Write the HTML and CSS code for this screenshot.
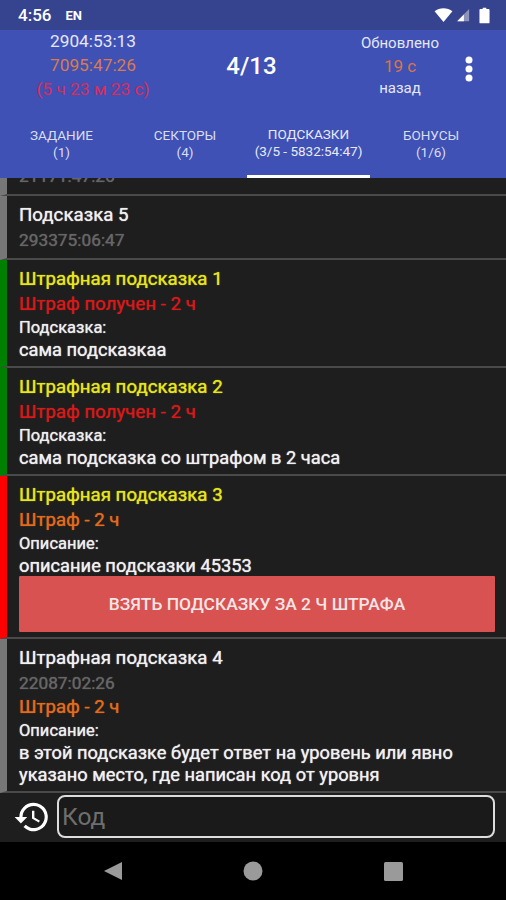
FILE: index.html
```html
<!DOCTYPE html>
<html lang="ru">
<head>
<meta charset="utf-8">
<title>Подсказки</title>
<link rel="stylesheet" href="styles.css">
</head>
<body>
<div class="app">
  <div class="status">
    <span class="clock">4:56</span><span class="lang">EN</span>
    <span class="status-icons">
      <svg width="19" height="15" viewBox="0 0 20 16"><path d="M0.5 3.5C5.5-0.8 14.5-0.8 19.500 3.500L10 15Z" fill="#fff"/></svg>
      <svg width="14" height="14" viewBox="0 0 16 16"><path d="M15 1V15H1Z" fill="#8e94b8"/><path d="M9 7.500V15H1.500Z" fill="#fff"/></svg>
      <svg class="batt" width="11" height="17" viewBox="0 0 12 17"><path d="M4 0H8V1.500H10.500A1 1 0 0 1 11.500 2.500V16A1 1 0 0 1 10.500 17H1.500A1 1 0 0 1 .5 16V2.500A1 1 0 0 1 1.500 1.500H4Z" fill="#fff"/></svg>
    </span>
  </div>
  <header class="header">
    <div class="top">
      <div class="timers">
        <div class="t-white">2904:53:13</div>
        <div class="t-orange">7095:47:26</div>
        <div class="t-red">(5 ч 23 м 23 с)</div>
      </div>
      <div class="level">4/13</div>
      <div class="updated">
        <div class="u-label">Обновлено</div>
        <div class="u-value">19 с</div>
        <div class="u-label">назад</div>
      </div>
      <svg class="more" width="10" height="26" viewBox="0 0 10 26"><circle cx="5" cy="4" r="3.500"/><circle cx="5" cy="13" r="3.500"/><circle cx="5" cy="22" r="3.500"/></svg>
    </div>
    <nav class="tabs">
      <div class="tab tab-a">ЗАДАНИЕ<br>(1)</div>
      <div class="tab tab-b">СЕКТОРЫ<br>(4)</div>
      <div class="tab tab-c active">ПОДСКАЗКИ<br>(3/5 - 5832:54:47)</div>
      <div class="tab tab-d">БОНУСЫ<br>(1/6)</div>
    </nav>
  </header>
  <main class="list">
    <article class="item grey short">
      <div class="time">21171:47:26</div>
    </article>
    <article class="item grey short">
      <div class="title">Подсказка 5</div>
      <div class="time">293375:06:47</div>
    </article>
    <article class="item green">
      <div class="title yellow">Штрафная подсказка 1</div>
      <div class="penalty red">Штраф получен - 2 ч</div>
      <div class="label">Подсказка:</div>
      <div class="body">сама подсказкаа</div>
    </article>
    <article class="item green">
      <div class="title yellow">Штрафная подсказка 2</div>
      <div class="penalty red">Штраф получен - 2 ч</div>
      <div class="label">Подсказка:</div>
      <div class="body">сама подсказка со штрафом в 2 часа</div>
    </article>
    <article class="item redbar">
      <div class="title yellow">Штрафная подсказка 3</div>
      <div class="penalty orange">Штраф - 2 ч</div>
      <div class="label">Описание:</div>
      <div class="body">описание подсказки 45353</div>
      <div class="take">ВЗЯТЬ ПОДСКАЗКУ ЗА 2 Ч ШТРАФА</div>
    </article>
    <article class="item grey">
      <div class="title">Штрафная подсказка 4</div>
      <div class="time">22087:02:26</div>
      <div class="penalty orange">Штраф - 2 ч</div>
      <div class="label">Описание:</div>
      <div class="body">в этой подсказке будет ответ на уровень или явно указано место, где написан код от уровня</div>
    </article>
  </main>
  <div class="code-bar">
    <svg class="history" width="38" height="38" viewBox="0 0 24 24"><path fill="#fff" d="M13 3a9 9 0 0 0-9 9H1l3.890 3.890.07.140L9 12H6a7 7 0 1 1 2.050 4.950l-1.420 1.420A9 9 0 1 0 13 3zm-1 5v5l4.280 2.540.72-1.210-3.500-2.080V8z"/></svg>
    <div class="code-input">Код</div>
  </div>
  <div class="navbar">
    <svg width="20" height="20" viewBox="0 0 20 20"><path d="M19 1V19L1 10Z" fill="#9a9a9a"/></svg>
    <svg width="20" height="20" viewBox="0 0 20 20"><circle cx="10" cy="10" r="9.500" fill="#9a9a9a"/></svg>
    <svg width="20" height="20" viewBox="0 0 20 20"><rect x="1" y="1" width="19" height="19" rx="1.500" fill="#9a9a9a"/></svg>
  </div>
</div>
</body>
</html>
```

FILE: styles.css
```css
* { box-sizing: border-box; }
html, body { margin: 0; padding: 0; background: #000; }
.app {
  width: 506px;
  height: 900px;
  display: flex;
  flex-direction: column;
  overflow: hidden;
  font-family: Roboto, "Liberation Sans", sans-serif;
  color: #fff;
}
.status {
  height: 30px;
  flex: none;
  background: #36438f;
  display: flex;
  align-items: center;
  padding: 0 16px 0 18px;
}
.clock { font-size: 17px; font-weight: 500; }
.lang { font-size: 13px; font-weight: 700; margin-left: 14px; }
.status-icons { margin-left: auto; display: flex; align-items: center; gap: 3px; }
.batt { margin-left: 6px; }
.header {
  flex: none;
  height: 148px;
  background: #3f51b5;
  display: flex;
  flex-direction: column;
  position: relative;
  z-index: 1;
}
.top {
  height: 85px;
  flex: none;
  display: flex;
  align-items: flex-start;
}
.timers {
  width: 186px;
  margin-top: -1px;
  text-align: center;
  font-size: 17.300px;
  line-height: 24px;
}
.t-white { color: #e4e7f5; }
.t-orange { color: #d97b4c; }
.t-red { color: #d92c5a; }
.level {
  width: 131px;
  text-align: center;
  font-size: 24px;
  font-weight: 500;
  line-height: 30px;
  padding-top: 21px;
}
.updated {
  width: 110px;
  margin-left: 28px;
  text-align: center;
  padding-top: 2px;
}
.u-label { font-size: 15px; line-height: 23px; color: #e4e7f5; }
.u-value { font-size: 17px; line-height: 22px; color: #d9744c; }
.more { fill: #fff; margin: 26px 0 0 9px; }
.tabs { flex: 1; display: flex; }
.tab {
  text-align: center;
  font-size: 13.500px;
  line-height: 17px;
  padding-top: 12px;
  color: #d9ddf0;
}
.tab-a { width: 123px; }
.tab-b { width: 124px; }
.tab-c { width: 123px; padding-top: 11px; }
.tab-d { width: 122px; }
.active { border-bottom: 3px solid #fff; color: #e8eaf6; }
.list {
  flex: 1;
  min-height: 0;
  overflow: hidden;
  display: flex;
  flex-direction: column;
  justify-content: flex-end;
  background: #1e1e1e;
}
.item {
  flex: none;
  background: #1e1e1e;
  border-left: 7px solid #777;
  border-bottom: 2px solid #4a4a4a;
  padding: 6px 11px 5px 12px;
  font-size: 18.300px;
  text-shadow: 0 0 1px currentColor;
}
.short { padding-bottom: 6px; }
.green { border-left-color: #008000; }
.redbar { border-left-color: #f00; }
.title { font-size: 18.700px; line-height: 26px; color: #f0f0f0; }
.time { color: #666; font-size: 17.300px; line-height: 24px; }
.yellow { color: #e6e619; }
.penalty { font-size: 18.700px; line-height: 25px; }
.red { color: #d51a1a; }
.orange { color: #e26b1c; }
.label { font-size: 16.500px; line-height: 22px; color: #eee; }
.body { color: #f0f0f0; line-height: 22px; }
.take {
  background: #d85252;
  height: 56px;
  margin-top: -1px;
  border-radius: 1px;
  display: flex;
  align-items: center;
  justify-content: center;
  font-size: 17.400px;
  font-weight: 500;
  color: #f4e6e6;
  text-shadow: none;
}
.code-bar {
  flex: none;
  height: 49px;
  background: #1e1e1e;
  display: flex;
  align-items: center;
  padding: 0 11px 2px 13px;
}
.history { flex: none; margin-right: 6px; }
.code-input {
  flex: 1;
  height: 43px;
  border: 2px solid #ddd;
  border-radius: 8px;
  background: #1a1a1a;
  color: #6e6e6e;
  font-size: 24.500px;
  line-height: 39px;
  padding-left: 3px;
}
.navbar {
  flex: none;
  height: 58px;
  background: #000;
  display: flex;
  justify-content: center;
  gap: 120px;
  align-items: center;
  padding-right: 1px;
}
```
